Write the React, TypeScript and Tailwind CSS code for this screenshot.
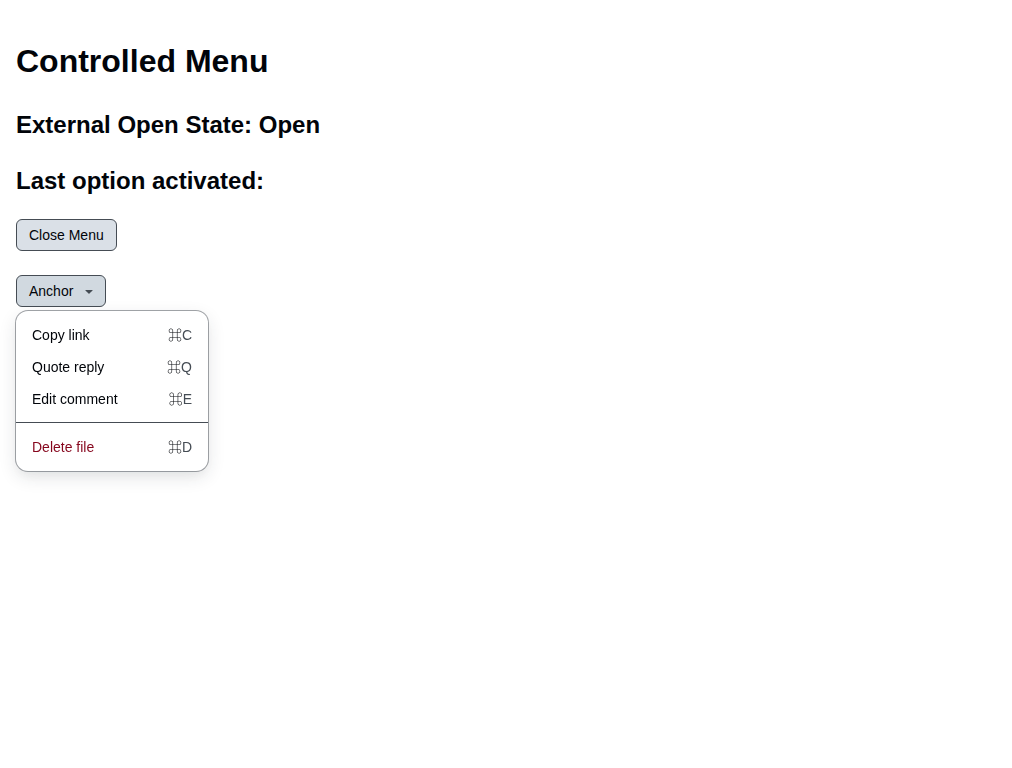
import { useState } from 'react';

type Item = { label: string; letter: string; danger?: boolean };

const groups: Item[][] = [
  [
    { label: 'Copy link', letter: 'C' },
    { label: 'Quote reply', letter: 'Q' },
    { label: 'Edit comment', letter: 'E' },
  ],
  [{ label: 'Delete file', letter: 'D', danger: true }],
];

function MenuItem({ item, onSelect }: { item: Item; onSelect: () => void }) {
  return (
    <li role="none" className="px-2">
      <button
        type="button"
        role="menuitem"
        onClick={onSelect}
        className={`flex h-8 w-full items-center justify-between rounded-md px-2 text-left ${
          item.danger ? 'text-[#86061d]' : 'text-[#010409]'
        }`}
      >
        <span>{item.label}</span>
        <span className="font-['Liberation_Sans','Noto_Sans_CJK_JP',sans-serif] text-[#454c54]">
          <span className="text-[#010409]">⌘</span>
          {item.letter}
        </span>
      </button>
    </li>
  );
}

export default function App() {
  const [open, setOpen] = useState(true);
  const [last, setLast] = useState('');

  const select = (label: string) => {
    setLast(label);
    setOpen(false);
  };

  return (
    <main className="min-h-screen bg-white px-4 pt-[37px] font-['Liberation_Sans',Arial,sans-serif] text-sm leading-5 text-[#010409]">
      <h1 className="text-[32px] leading-[48px] font-bold">Controlled Menu</h1>
      <h2 className="mt-[22px] text-2xl leading-9 font-bold">External Open State: {open ? 'Open' : 'Closed'}</h2>
      <h2 className="mt-5 text-2xl leading-9 font-bold">Last option activated: {last}</h2>

      <div className="mt-5 flex flex-col items-start gap-6">
        <button
          type="button"
          onClick={() => setOpen(!open)}
          className="flex h-8 items-center rounded-md border border-[#454c54] bg-[#dae0e7] px-3 font-medium"
        >
          {open ? 'Close Menu' : 'Open Menu'}
        </button>

        <div className="relative">
          <button
            type="button"
            aria-haspopup="menu"
            aria-expanded={open}
            onClick={() => setOpen(!open)}
            className="flex h-8 items-center gap-2 rounded-md border border-[#454c54] bg-[#d1d9e0] pr-2 pl-3 font-medium"
          >
            Anchor
            <svg aria-hidden="true" viewBox="0 0 16 16" className="size-4 fill-[#454c54]">
              <path d="m4.427 7.427 3.396 3.396a.25.25 0 0 0 .354 0l3.396-3.396A.25.25 0 0 0 11.396 7H4.604a.25.25 0 0 0-.177.427Z" />
            </svg>
          </button>

          {open && (
            <div className="absolute top-full left-0 mt-1 w-48 rounded-xl bg-white py-2 shadow-[0_0_0_1px_#454c5480,0_6px_12px_-3px_#25292e0a,0_6px_18px_0_#25292e1f] will-change-transform">
              <ul role="menu" aria-label="Anchor">
                {groups[0].map((item) => (
                  <MenuItem key={item.label} item={item} onSelect={() => select(item.label)} />
                ))}
                <li role="separator" className="mt-[7px] mb-2 h-px bg-[#454c54]" />
                {groups[1].map((item) => (
                  <MenuItem key={item.label} item={item} onSelect={() => select(item.label)} />
                ))}
              </ul>
            </div>
          )}
        </div>
      </div>
    </main>
  );
}
